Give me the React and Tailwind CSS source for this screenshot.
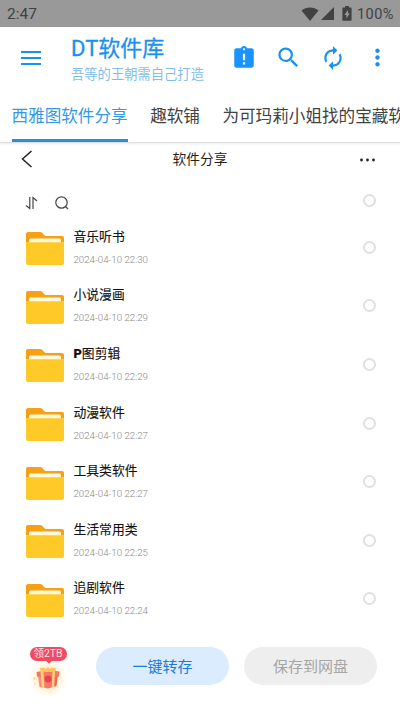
import { useState } from 'react'
import { MdAssignmentLate, MdAutorenew, MdMoreVert, MdSearch } from 'react-icons/md'

const tabs = [
  { id: 'seattle', label: '西雅图软件分享' },
  { id: 'quruanpu', label: '趣软铺' },
  { id: 'treasure', label: '为可玛莉小姐找的宝藏软' },
]

const folders = [
  { name: '音乐听书', time: '2024-04-10 22:30' },
  { name: '小说漫画', time: '2024-04-10 22:29' },
  { prefix: 'P', name: '图剪辑', time: '2024-04-10 22:29' },
  { name: '动漫软件', time: '2024-04-10 22:27' },
  { name: '工具类软件', time: '2024-04-10 22:27' },
  { name: '生活常用类', time: '2024-04-10 22:25' },
  { name: '追剧软件', time: '2024-04-10 22:24' },
]

function StatusBar() {
  return (
    <div className="flex h-[27px] shrink-0 items-center justify-between bg-[#999999] pl-[7px] pr-[6px] text-[#424242]">
      <span className="mt-[2px] text-[15.500px] leading-none">2:47</span>
      <div className="flex items-center">
        <svg width="18" height="14" viewBox="0 0 18 14" fill="currentColor">
          <path d="M9 14 0.5 3.4C2.8 1.5 5.8 0.4 9 0.4s6.2 1.1 8.5 3z" />
        </svg>
        <svg className="ml-[2px]" width="13" height="13" viewBox="0 0 13 13" fill="currentColor">
          <path d="M0 13 13 0v13z" />
        </svg>
        <svg className="ml-[8px]" width="10" height="15" viewBox="0 0 10 15" fill="currentColor">
          <path fillRule="evenodd" d="M3 0h4v1.6h1.6c.6 0 1 .4 1 1v11.2c0 .6-.4 1-1 1H1.4c-.6 0-1-.4-1-1V2.600c0-.6.4-1 1-1H3zM6 4 2.400 9h2v3.600L7.700 7.400H6z" />
        </svg>
        <span className="ml-[5px] mt-[3px] text-[14.500px] leading-none tracking-[0.5px]">100%</span>
      </div>
    </div>
  )
}

function AppBar() {
  return (
    <header className="flex h-[63px] shrink-0 items-start text-[#1c90ed]">
      <button className="ml-[20px] mt-[23px]">
        <svg width="22" height="16" viewBox="0 0 22 16" stroke="currentColor" strokeWidth="1.900">
          <path d="M1 2h20M1 8h20M1 14h20" />
        </svg>
      </button>
      <div className="ml-[29px] mt-[8px] flex-1 whitespace-nowrap">
        <h1 className="text-[22px] leading-[27px] [-webkit-text-stroke:0.3px]">DT软件库</h1>
        <p className="mt-px text-[13.300px] leading-[24px] text-[#85bdea]">吾等的王朝需自己打造</p>
      </div>
      <div className="mt-[17px] flex items-center">
        <MdAssignmentLate size={26} className="text-[#1994ff]" />
        <MdSearch size={27} className="ml-[18px]" />
        <MdAutorenew size={26} className="ml-[18px]" />
        <MdMoreVert size={27} className="ml-[18px] mr-[9px]" />
      </div>
    </header>
  )
}

function FolderIcon() {
  return (
    <svg width="38" height="33" viewBox="0 0 38 33">
      <path fill="#f5a015" d="M2 0h12.500c.7 0 1.100.2 1.600.7l2.300 2.500c.4.5.8.7 1.500.7H36c1.100 0 2 .9 2 2V14H0V2C0 .9.900 0 2 0z" />
      <rect x="3" y="6.500" width="32" height="6" rx="1.500" fill="#fff9dc" />
      <path fill="#ffc928" d="M0 10h2.500c.9 0 1.300.3 2 .3h29c.8 0 1.200-.3 2-.3H38V31c0 1.100-.9 2-2 2H2c-1.100 0-2-.9-2-2z" />
    </svg>
  )
}

function Gift() {
  return (
    <div className="flex w-[60px] flex-col items-center">
      <div className="relative z-10 h-[14px] w-[37px] rounded-full bg-[#ef4b63] text-center text-[10.500px] leading-[14px] text-[#ffe6e6]">
        领2TB
        <span className="absolute bottom-[-2px] left-[17px] h-[4px] w-[4px] rotate-45 bg-[#ef4b63]" />
      </div>
      <svg className="mt-[-1px]" width="44" height="38" viewBox="0 0 44 38">
        <defs>
          <radialGradient id="glow">
            <stop offset="0.300" stopColor="#ffe9b8" />
            <stop offset="1" stopColor="#fff3d0" stopOpacity="0" />
          </radialGradient>
          <linearGradient id="box" x2="1">
            <stop stopColor="#f99478" />
            <stop offset="1" stopColor="#ee5f59" />
          </linearGradient>
        </defs>
        <circle cx="22" cy="18" r="20" fill="url(#glow)" />
        <path fill="url(#box)" d="m12 15 20-1-1.500 12L22 28.500l-8.500-1.500z" />
        <path fill="#f57862" d="m10.500 12 11.500-2 11.500 1.500-.5 5L22 18.500l-11-2z" />
        <path fill="#ffcf7d" d="m14.500 11.300 3-.6.800 17.300-2.500-.6zM26.500 10.800l2.500.4-.8 15.900-2.500.8z" />
        <path fill="#ffc257" d="M22 12c-3 0-8-.5-8-2.800 0-2 4.500-1.800 6-.2l2-2 2 2c1.500-1.800 6-1.800 6 .2 0 2.300-5 2.800-8 2.800z" />
        <circle cx="22" cy="19" r="3.500" fill="#e54252" />
        <path fill="#ffd78f" d="m7 18 2-1 1 2-2 1zM9 23l1 1-1 1-1-1z" />
      </svg>
    </div>
  )
}

function Radio() {
  return <span className="block h-[13px] w-[13px] rounded-full border-2 border-[#e0e0e0]" />
}

export default function App() {
  const [activeTab, setActiveTab] = useState('seattle')

  return (
    <div className="flex h-[710px] w-[400px] flex-col overflow-hidden bg-white font-[Roboto,'Noto_Sans_CJK_SC',sans-serif]">
      <StatusBar />
      <AppBar />

      {/* Tabs */}
      <nav className="flex h-[53px] shrink-0 gap-[22.500px] overflow-hidden whitespace-nowrap border-b border-[#dedede] pl-[11.500px] shadow-[0_1px_2px_rgba(0,0,0,0.08)]">
        {tabs.map((tab) => (
          <button
            key={tab.id}
            onClick={() => setActiveTab(tab.id)}
            className={`h-[52px] shrink-0 border-b-[3px] pt-[4px] text-[16.600px] leading-[45px] ${
              activeTab === tab.id ? 'border-[#2a8fdc] text-[#3498e4]' : 'border-transparent text-[#424242]'
            }`}
          >
            {tab.label}
          </button>
        ))}
      </nav>

      {/* Share header */}
      <div className="grid h-[32px] shrink-0 grid-cols-3 items-center">
        <svg className="ml-[21px]" width="12" height="18" viewBox="0 0 12 18" fill="none" stroke="#222" strokeWidth="1.500">
          <path d="M10.500 1 1.500 9l9 8" />
        </svg>
        <h2 className="mt-px text-center text-[13.700px] leading-none text-[#222]">软件分享</h2>
        <svg className="mr-[24px] mt-px justify-self-end" width="17" height="4" viewBox="0 0 17 4" fill="#222">
          <circle cx="2.500" cy="2" r="1.400" />
          <circle cx="8.500" cy="2" r="1.400" />
          <circle cx="14.500" cy="2" r="1.400" />
        </svg>
      </div>

      {/* Sort and search */}
      <div className="mt-[13px] flex h-[28px] shrink-0 items-center pl-[25px] pr-[24.500px]">
        <svg className="mt-[2px]" width="13" height="14" viewBox="0 0 13 14" fill="none" stroke="#444" strokeWidth="1.200">
          <path d="M1 9.500 4.800 12.500V1M8 13V1.500l4 3.500" />
        </svg>
        <svg className="ml-[17px] mt-px" width="14" height="14" viewBox="0 0 14 14" fill="none" stroke="#444" strokeWidth="1.200">
          <circle cx="6.500" cy="6.500" r="5.700" />
          <path d="m10.500 10.500 2.700 2.700" />
        </svg>
        <div className="mb-[3px] ml-auto">
          <Radio />
        </div>
      </div>

      {/* Folder list */}
      <ul className="mt-[2px] shrink-0">
        {folders.map((folder) => (
          <li key={folder.name} className="flex h-[58.600px] items-center pl-[26px] pr-[24.500px]">
            <div className="mt-[3px]">
              <FolderIcon />
            </div>
            <div className="ml-[9.500px] mt-[2px] flex-1">
              <p className="text-[12.800px] leading-[18px] text-[#111] [-webkit-text-stroke:0.12px]">
                {folder.prefix && <b className="font-black">{folder.prefix}</b>}
                {folder.name}
              </p>
              <p className="mt-[5px] text-[9.700px] font-light leading-[18px] text-[#888]">{folder.time}</p>
            </div>
            <Radio />
          </li>
        ))}
      </ul>

      {/* Bottom actions */}
      <footer className="flex flex-1 items-start pl-[18px] pt-[19px]">
        <Gift />
        <button className="ml-[18px] h-[38px] w-[133px] rounded-full bg-[#dbecff] pt-[2px] text-[15px] text-[#1b7cd8]">一键转存</button>
        <button className="ml-[15px] h-[38px] w-[133px] rounded-full bg-[#eeeeee] pt-[2px] text-[15px] text-[#a5a5a5]">保存到网盘</button>
      </footer>
    </div>
  )
}
